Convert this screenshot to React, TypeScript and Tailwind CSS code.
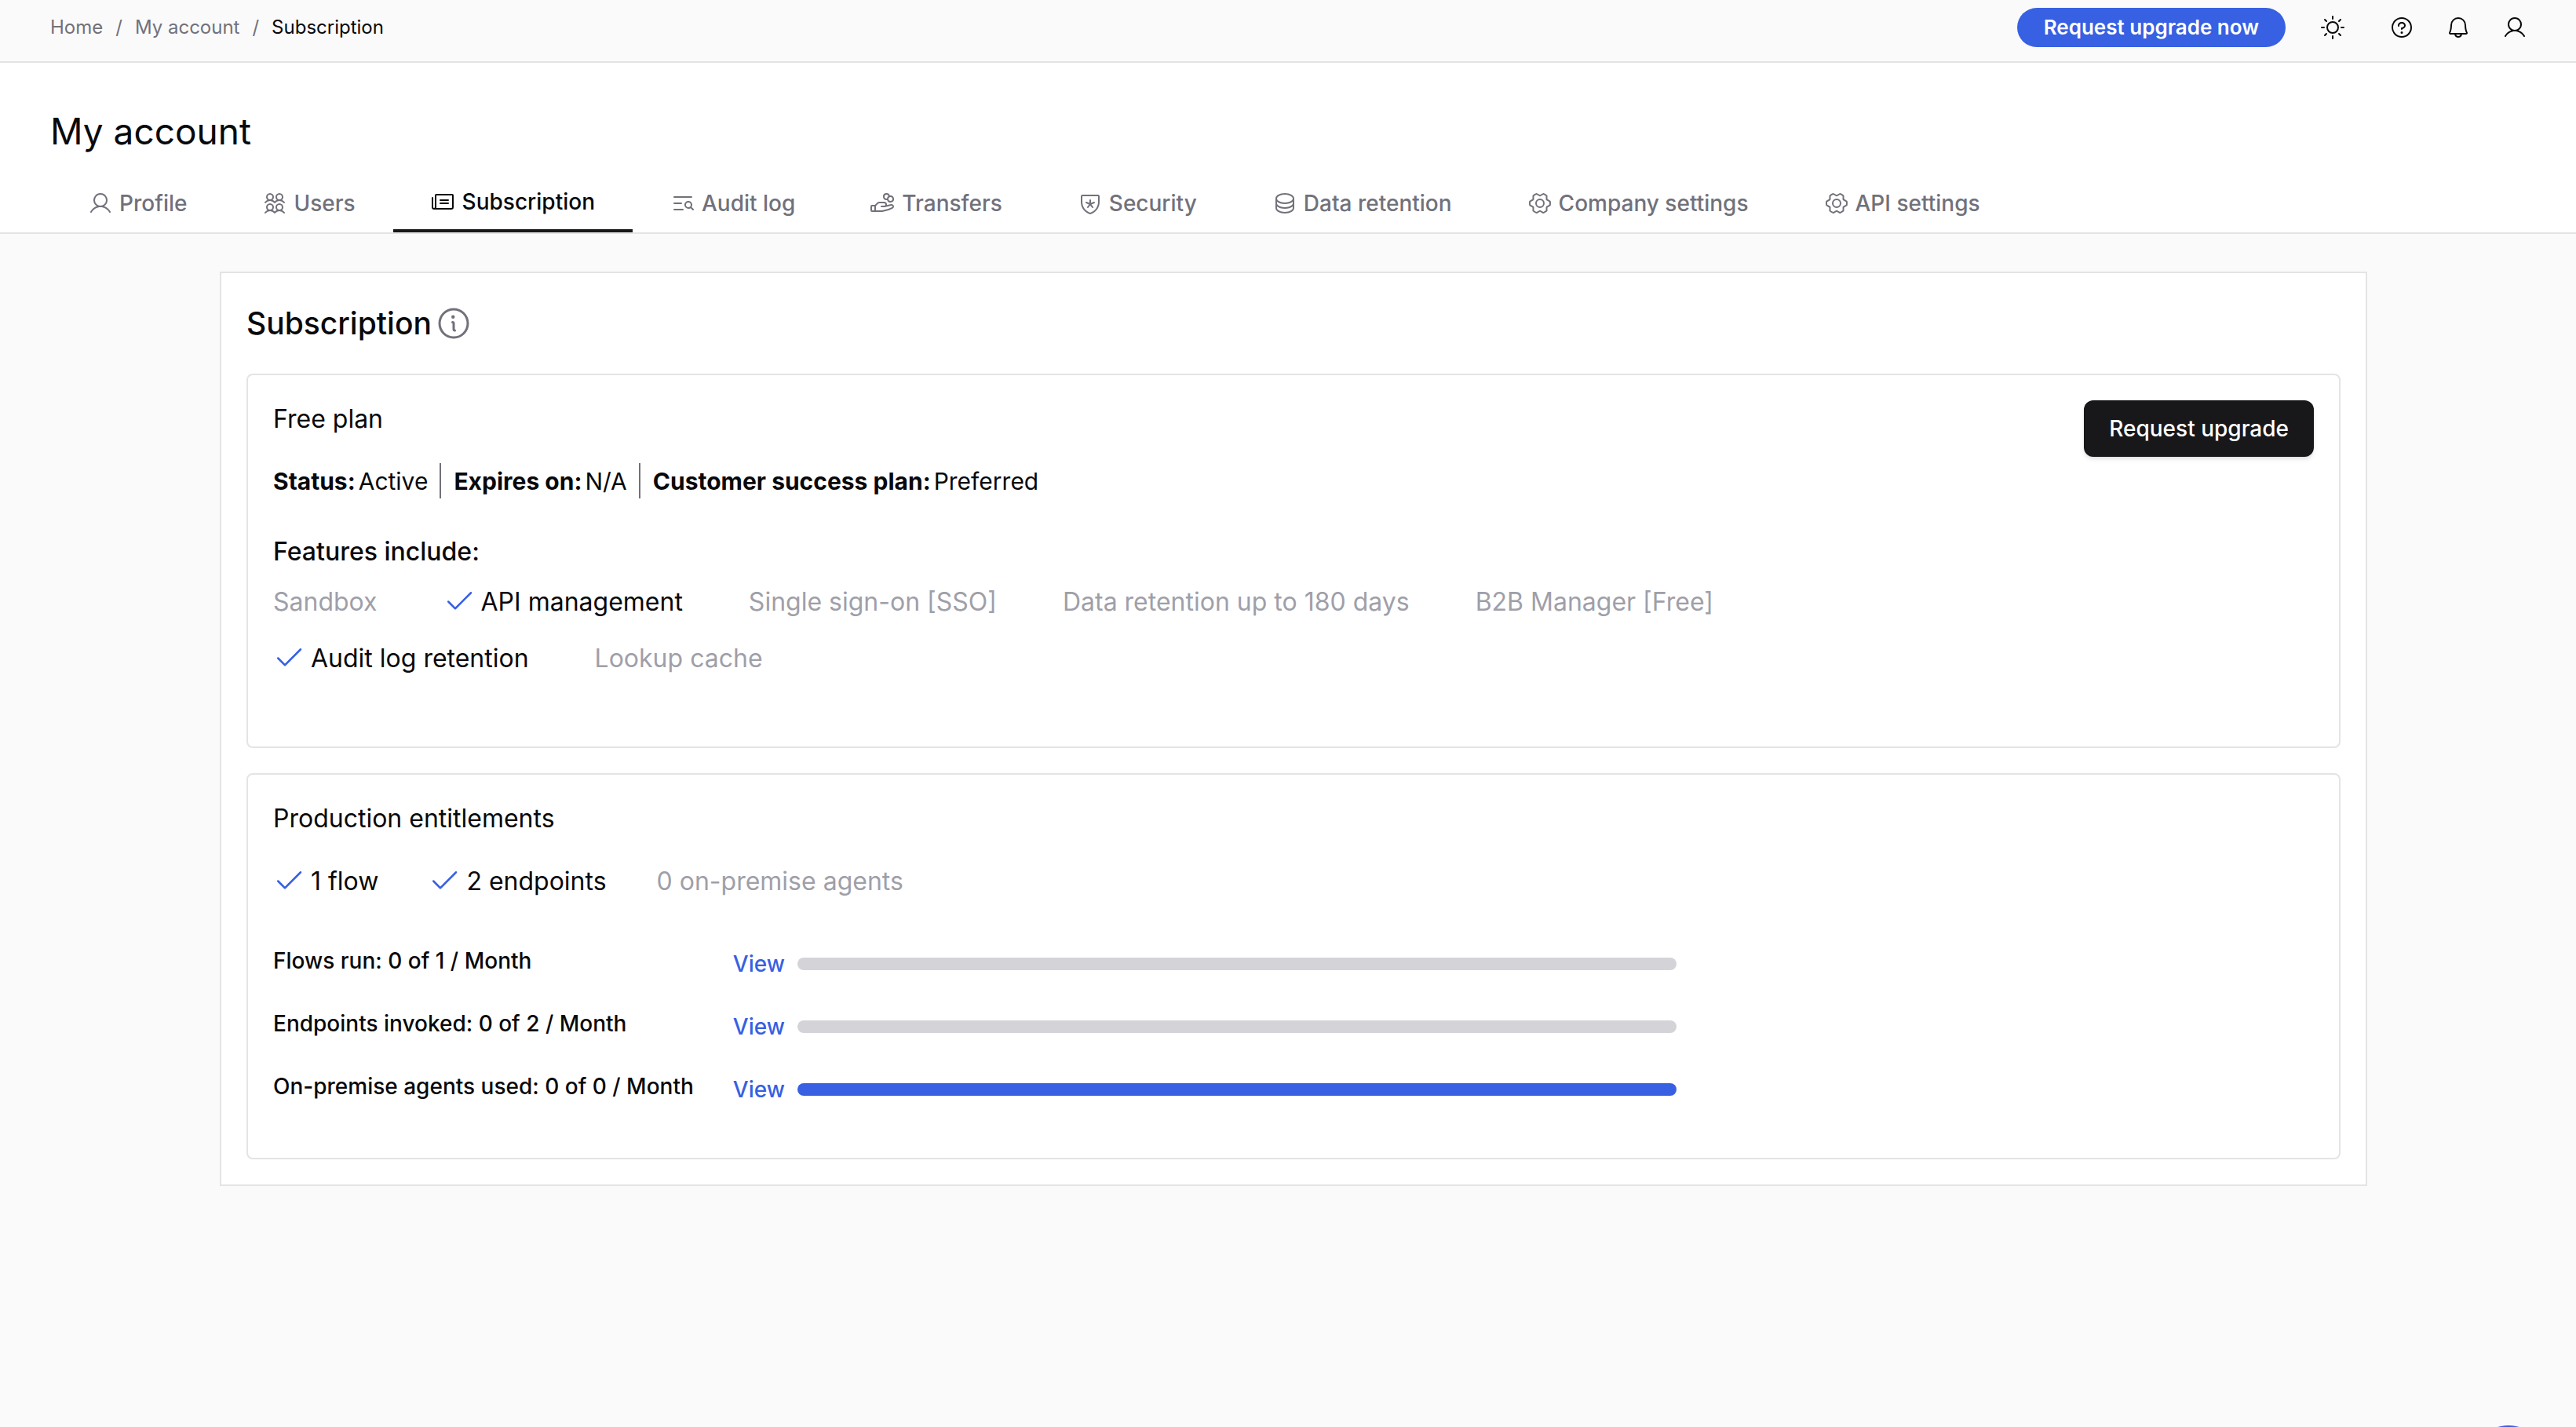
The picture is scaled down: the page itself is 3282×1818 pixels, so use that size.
import type { ReactNode } from "react";
import {
  PiBell,
  PiCheck,
  PiDatabase,
  PiGearSix,
  PiHandCoins,
  PiInfo,
  PiListMagnifyingGlass,
  PiNewspaper,
  PiQuestion,
  PiShieldStar,
  PiSun,
  PiUser,
  PiUsersFour,
} from "react-icons/pi";
import type { IconType } from "react-icons";

type Tab = { label: string; icon: IconType; active?: boolean };
type Item = { label: string; included: boolean };

const tabs: Tab[] = [
  { label: "Profile", icon: PiUser },
  { label: "Users", icon: PiUsersFour },
  { label: "Subscription", icon: PiNewspaper, active: true },
  { label: "Audit log", icon: PiListMagnifyingGlass },
  { label: "Transfers", icon: PiHandCoins },
  { label: "Security", icon: PiShieldStar },
  { label: "Data retention", icon: PiDatabase },
  { label: "Company settings", icon: PiGearSix },
  { label: "API settings", icon: PiGearSix },
];

const features: Item[] = [
  { label: "Sandbox", included: false },
  { label: "API management", included: true },
  { label: "Single sign-on [SSO]", included: false },
  { label: "Data retention up to 180 days", included: false },
  { label: "B2B Manager [Free]", included: false },
  { label: "Audit log retention", included: true },
  { label: "Lookup cache", included: false },
];

const entitlements: Item[] = [
  { label: "1 flow", included: true },
  { label: "2 endpoints", included: true },
  { label: "0 on-premise agents", included: false },
];

const usage = [
  { label: "Flows run: 0 of 1 / Month", percent: 0 },
  { label: "Endpoints invoked: 0 of 2 / Month", percent: 0 },
  { label: "On-premise agents used: 0 of 0 / Month", percent: 100 },
];

function IconButton({ label, icon: Icon }: { label: string; icon: IconType }) {
  return (
    <button type="button" aria-label={label} className="flex size-9 items-center justify-center text-zinc-950">
      <Icon className="size-8" />
    </button>
  );
}

function TopBar() {
  return (
    <header className="flex h-20 items-center justify-between border-b-2 border-[#e4e4e4] bg-[#fafafa] pr-15 pl-16 pb-2">
      <nav aria-label="Breadcrumb">
        <ol className="flex gap-4 text-[24px] leading-8 text-zinc-500">
          <li><a href="#home">Home</a></li>
          <li aria-hidden="true">/</li>
          <li><a href="#account">My account</a></li>
          <li aria-hidden="true">/</li>
          <li aria-current="page" className="text-zinc-950">Subscription</li>
        </ol>
      </nav>
      <div className="flex items-center">
        <button type="button" className="h-[50px] rounded-full bg-[#3760e2] px-[34px] text-[26px] leading-8 font-semibold text-white">
          Request upgrade now
        </button>
        <div className="ml-[42px]">
          <IconButton label="Theme" icon={PiSun} />
        </div>
        <div className="ml-[52px] flex gap-9">
          <IconButton label="Help" icon={PiQuestion} />
          <IconButton label="Notifications" icon={PiBell} />
          <IconButton label="Account" icon={PiUser} />
        </div>
      </div>
    </header>
  );
}

function TabBar() {
  return (
    <nav aria-label="Account sections" className="flex border-b-2 border-[#e4e4e4] px-16">
      {tabs.map(({ label, icon: Icon, active }) => (
        <a
          key={label}
          href="#section"
          aria-current={active ? "page" : undefined}
          className={
            active
              ? "flex h-20 items-center gap-2 border-b-4 border-zinc-900 px-12 pt-1.5 text-[28px] leading-10 font-medium text-zinc-950"
              : "flex h-20 items-center gap-2 px-12 pt-1.5 text-[28px] leading-10 font-medium text-zinc-500"
          }
        >
          <Icon className="size-8" />
          {label}
        </a>
      ))}
    </nav>
  );
}

function Panel({ children }: { children: ReactNode }) {
  return <section className="rounded-lg border-2 border-[#e4e4e4] bg-white px-8">{children}</section>;
}

function ItemLabel({ label, included }: Item) {
  return included ? (
    <li className="flex items-center gap-2 text-zinc-950">
      <PiCheck className="-mt-1.5 size-10 text-[#3760e2]" />
      {label}
    </li>
  ) : (
    <li className="text-zinc-400">{label}</li>
  );
}

function Fact({ name, value }: { name: string; value: string }) {
  return (
    <div className="flex h-[45px] items-center gap-1 border-l-2 border-zinc-500 pl-4 first:border-l-0 first:pl-0">
      <dt className="font-bold">{name}</dt>
      <dd>{value}</dd>
    </div>
  );
}

export default function App() {
  return (
    <div className="min-h-screen bg-[#fafafa] font-['Inter',sans-serif] text-zinc-950">
      <TopBar />
      <div className="bg-white pt-[58px]">
        <h1 className="px-16 pb-5 text-[46px] leading-[58px]">My account</h1>
        <TabBar />
      </div>
      <main className="pt-12 pr-[266px] pl-[280px]">
        <div className="border-2 border-[#e4e4e4] bg-white p-8">
          <div className="mt-1 mb-9 flex h-14 items-center gap-1">
            <h2 className="text-[39px] leading-14 font-medium">Subscription</h2>
            <PiInfo className="size-12 text-zinc-500" aria-label="About subscription" />
          </div>
          <div className="flex flex-col gap-8">
            <Panel>
              <div className="flex items-start justify-between pt-8">
                <div className="pt-1">
                  <h3 className="text-[32px] leading-10">Free plan</h3>
                  <dl className="mt-9 flex gap-[15px] text-[30px] leading-10">
                    <Fact name="Status:" value="Active" />
                    <Fact name="Expires on:" value="N/A" />
                    <Fact name="Customer success plan:" value="Preferred" />
                  </dl>
                </div>
                <button type="button" className="h-18 rounded-xl bg-zinc-900 px-8 text-[28px] leading-10 font-medium text-white shadow-md">
                  Request upgrade
                </button>
              </div>
              <h4 className="mt-12 text-[32px] leading-10 font-medium">Features include:</h4>
              <ul className="mt-6 mb-[92px] flex max-w-[1960px] flex-wrap gap-x-[84px] gap-y-8 text-[32px] leading-10">
                {features.map((f) => (
                  <ItemLabel key={f.label} {...f} />
                ))}
              </ul>
            </Panel>
            <Panel>
              <h3 className="mt-9 text-[32px] leading-10">Production entitlements</h3>
              <ul className="mt-10 flex flex-wrap gap-x-16 text-[32px] leading-10">
                {entitlements.map((e) => (
                  <ItemLabel key={e.label} {...e} />
                ))}
              </ul>
              <table className="mt-[43px] mb-[49px] text-left text-[28px] leading-10 font-medium">
                <tbody>
                  {usage.map((u) => (
                    <tr key={u.label} className="h-20">
                      <th scope="row" className="pr-[50px] pb-1 font-medium">{u.label}</th>
                      <td className="pt-1 pr-4">
                        <a href="#usage" className="text-[#3760e2]">View</a>
                      </td>
                      <td className="pt-1">
                        <div
                          role="progressbar"
                          aria-label={u.label}
                          aria-valuenow={u.percent}
                          className="h-4 w-[1120px] overflow-hidden rounded-full bg-zinc-300"
                        >
                          <div className="h-full bg-[#3760e2]" style={{ width: `${u.percent}%` }} />
                        </div>
                      </td>
                    </tr>
                  ))}
                </tbody>
              </table>
            </Panel>
          </div>
        </div>
      </main>
      <button type="button" aria-label="Open chat" className="fixed right-[38px] -bottom-[94px] size-24 rounded-full bg-[#4458e0]" />
    </div>
  );
}
